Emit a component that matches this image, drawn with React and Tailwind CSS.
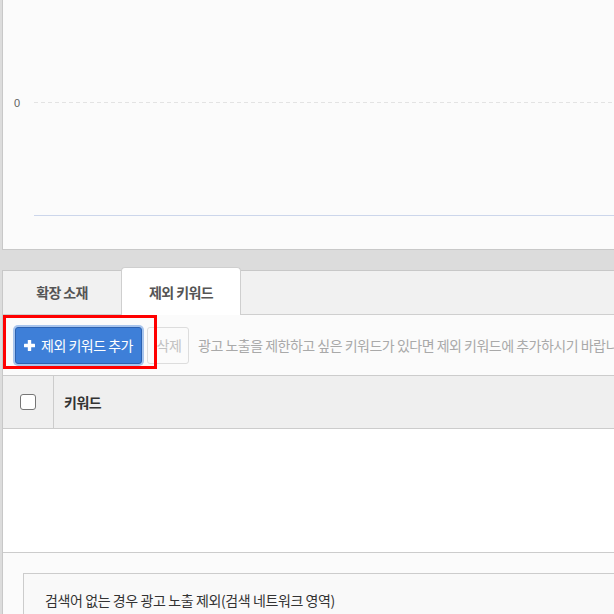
import React from "react";

const KR = { fontFamily: '"Noto Sans CJK KR", "Noto Sans", sans-serif' };

function Plus() {
  return (
    <svg width="11" height="11" viewBox="0 0 11 11" className="shrink-0">
      <rect x="3.8" y="0" width="3.4" height="11" fill="#fff" rx="0.5" />
      <rect x="0" y="3.8" width="11" height="3.4" fill="#fff" rx="0.5" />
    </svg>
  );
}

export default function App() {
  return (
    <div
      className="w-[614px] h-[614px] overflow-hidden bg-[#dcdcdc] pl-[2px]"
      style={KR}
    >
      {/* chart card */}
      <div className="h-[250px] bg-[#fbfbfb] border-l border-b border-[#c8c8c8]">
        <svg width="612" height="249" className="block">
          <text
            x="11"
            y="107"
            fontSize="11"
            fill="#606060"
            fontFamily='"Liberation Sans", Arial, sans-serif'
          >
            0
          </text>
          <line
            x1="31"
            y1="102.5"
            x2="612"
            y2="102.5"
            stroke="#e3e3e3"
            strokeWidth="1"
            strokeDasharray="4,3"
          />
          <line x1="31" y1="215.5" x2="612" y2="215.5" stroke="#ccd6eb" strokeWidth="1" />
        </svg>
      </div>

      {/* tabs panel */}
      <div className="mt-[20px] border-l border-t border-[#c8c8c8] bg-white">
        <div className="h-[44px] bg-[#f1f1f1] border-b border-[#cfcfcf] flex items-start">
          <div className="w-[118px] h-[43px] shrink-0 flex items-center justify-center text-[14px] font-bold tracking-[-0.6px] text-[#555]">
            확장 소재
          </div>
          <div className="relative z-10 w-[120px] h-[48px] shrink-0 -mt-[4px] bg-white border border-b-0 border-[#cfcfcf] rounded-t-[4px] flex items-center justify-center pt-[1px] text-[14px] font-bold tracking-[-0.6px] text-[#555]">
            제외 키워드
          </div>
        </div>

        {/* toolbar */}
        <div className="relative h-[60px] bg-[#fbfbfb] flex items-center pl-[12px] overflow-hidden">
          <button className="shrink-0 w-[127px] h-[37px] bg-[#3e7fd8] border border-[#2c62b2] rounded-[3px] ring-2 ring-[#a8c5ed] flex items-center justify-center gap-[6px] text-white text-[14px] tracking-[-0.5px]">
            <Plus />
            <span>제외 키워드 추가</span>
          </button>
          <button className="shrink-0 ml-[5px] w-[42px] h-[37px] bg-[#fbfbfb] border border-[#dddddd] rounded-[3px] flex items-center justify-center pl-[2px] text-[14px] tracking-[-0.5px] text-[#c2c2c2]">
            삭제
          </button>
          <span className="shrink-0 ml-[9px] whitespace-nowrap text-[14px] tracking-[-0.5px] text-[#a9a9a9]">
            광고 노출을 제한하고 싶은 키워드가 있다면 제외 키워드에 추가하시기 바랍니다.
          </span>
          <div className="absolute left-0 top-0 w-[154px] h-[54px] border-[3px] border-[#ff0000] z-20 pointer-events-none" />
        </div>

        {/* table header */}
        <div className="h-[54px] bg-[#efefef] border-t border-b border-[#cccccc] flex">
          <div className="w-[51px] shrink-0 border-r border-[#cccccc] flex items-center justify-center">
            <div className="w-[16px] h-[16px] bg-white border border-[#767676] rounded-[3px]" />
          </div>
          <div className="flex items-center pl-[10px] text-[14px] font-bold tracking-[-0.5px] text-[#333]">
            키워드
          </div>
        </div>

        {/* table body */}
        <div className="h-[124px] bg-white border-b border-[#cccccc]" />

        {/* bottom */}
        <div className="h-[80px] bg-[#fbfbfb] pt-[20px] pl-[20px]">
          <div className="h-[60px] bg-[#f9f9f9] border-l border-t border-[#cccccc] pl-[21px] pt-[16px] text-[14px] tracking-[-0.4px] text-[#333] whitespace-nowrap">
            검색어 없는 경우 광고 노출 제외(검색 네트워크 영역)
          </div>
        </div>
      </div>
    </div>
  );
}
